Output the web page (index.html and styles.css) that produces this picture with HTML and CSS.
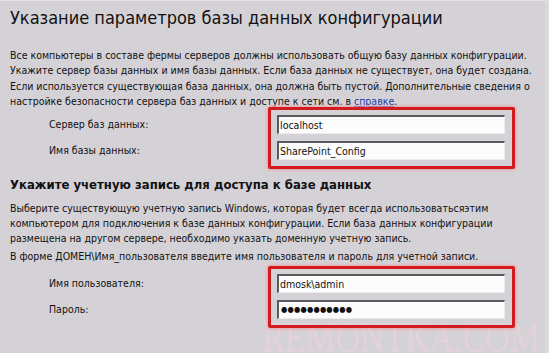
FILE: index.html
```html
<!DOCTYPE html>
<html lang="ru">
<head>
<meta charset="utf-8">
<link rel="stylesheet" href="styles.css">
</head>
<body>
<div class="frame">
  <h1 class="title">Указание параметров базы данных конфигурации</h1>
  <p class="text">Все компьютеры в составе фермы серверов должны использовать общую базу данных конфигурации.<br>Укажите сервер базы данных и имя базы данных. Если база данных не существует, она будет создана.<br>Если используется существующая база данных, она должна быть пустой. Дополнительные сведения о<br>настройке безопасности сервера баз данных и доступе к сети см. в <a class="link" href="#">справке</a>.</p>
  <div class="fields fields-db">
    <div class="labels">
      <div class="label">Сервер баз данных:</div>
      <div class="label">Имя базы данных:</div>
    </div>
    <div class="mark">
      <div class="input">localhost</div>
      <div class="input">SharePoint_Config</div>
    </div>
  </div>
  <h2 class="heading">Укажите учетную запись для доступа к базе данных</h2>
  <p class="text text2">Выберите существующую учетную запись Windows, которая будет всегда использоватьсяэтим<br>компьютером для подключения к базе данных конфигурации. Если база данных конфигурации<br>размещена на другом сервере, необходимо указать доменную учетную запись.</p>
  <p class="text text3">В форме ДОМЕН\Имя_пользователя введите имя пользователя и пароль для учетной записи.</p>
  <div class="fields fields-user">
    <div class="labels">
      <div class="label">Имя пользователя:</div>
      <div class="label">Пароль:</div>
    </div>
    <div class="mark">
      <div class="input">dmosk\admin</div>
      <div class="input pass">●●●●●●●●●●●</div>
    </div>
  </div>
  <div class="watermark">REMONTKA.COM</div>
</div>
</body>
</html>
```
FILE: styles.css
```css
html, body {
  margin: 0;
  padding: 0;
  width: 549px;
  height: 353px;
  overflow: hidden;
  background: #d5d2d7;
}
.frame {
  position: relative;
  box-sizing: border-box;
  width: 549px;
  height: 353px;
  padding: 0 10px;
  border-top: 1px solid #e4e2e6;
  border-right: 4px solid #dcdadf;
  font-family: "DejaVu Sans Condensed", "DejaVu Sans", sans-serif;
  color: #111;
  overflow: hidden;
}
.title {
  margin: 5px 0 0 0;
  font-size: 18px;
  font-weight: normal;
  line-height: 24px;
  white-space: nowrap;
}
.text {
  margin: 18px 0 0 0;
  font-size: 10.5px;
  line-height: 15.3px;
  white-space: nowrap;
}
.link {
  color: #1a3aa8;
  text-decoration: underline;
}
.fields {
  display: flex;
  position: relative;
  z-index: 1;
}
.fields-db { margin-top: -2px; }
.labels {
  width: 219px;
  padding-left: 39px;
  padding-top: 8px;
  display: flex;
  flex-direction: column;
  gap: 7px;
  font-size: 10.5px;
}
.label { height: 19px; line-height: 18px; }
.mark {
  border: 3px solid #d11b1f;
  border-radius: 2px;
  box-shadow: 0 0 3px 1px #eaa0a6;
  padding: 5px 7px 6px 6px;
  display: flex;
  flex-direction: column;
  gap: 7px;
  width: 228px;
}
.input {
  box-sizing: border-box;
  height: 19px;
  background: #fcfcfc;
  border-top: 2px solid #5a5a5a;
  border-left: 2px solid #5a5a5a;
  border-bottom: 1px solid #ececec;
  border-right: 1px solid #ececec;
  font-size: 10.5px;
  line-height: 16px;
  padding-left: 1px;
}
.pass { font-size: 8px; letter-spacing: 0.2px; padding-left: 2px; }
.heading {
  margin: 7px 0 0 0;
  font-size: 13px;
  font-weight: bold;
  line-height: 18px;
  white-space: nowrap;
}
.text2 { margin-top: 7px; line-height: 15px; }
.text3 { margin-top: 3px; }
.fields-user { margin-top: 2px; }
.watermark {
  position: absolute;
  left: 262px;
  top: 312px;
  font-family: "Liberation Serif", serif;
  font-size: 44px;
  line-height: 50px;
  color: #e3d2d7;
  white-space: nowrap;
  transform: scaleX(0.77);
  transform-origin: left top;
  z-index: 0;
}
```
